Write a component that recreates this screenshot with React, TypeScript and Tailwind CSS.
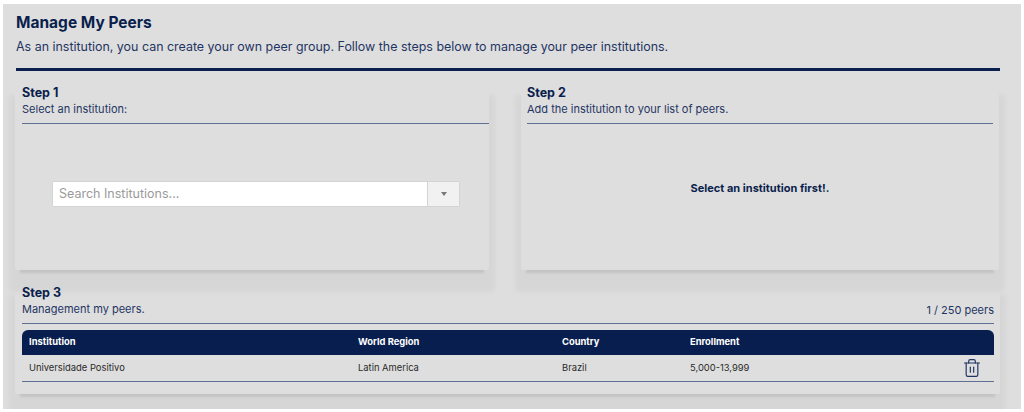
import { Trash2 } from "lucide-react";

const cardShadow =
  "shadow-[0_8px_2px_-5px_#c3c3c3,0_16px_4px_6px_#d6d6d6]";

function StepHeader({ step, text }: { step: string; text: string }) {
  return (
    <div className="h-[39px] border-b border-[#5f7094]">
      <div className="h-[15px] text-[12.5px] leading-[15px] font-bold text-[#0a1f4d]">{step}</div>
      <div className="mt-[2px] h-[15px] text-[11px] leading-[15px] text-[#1f3563]">{text}</div>
    </div>
  );
}

export default function App() {
  return (
    <div className="h-[412px] w-[1024px] overflow-hidden bg-white pt-[4px] pl-[3px] font-['Inter',sans-serif]">
      <div className="h-[405px] w-[1018px] overflow-hidden bg-[#dedede] pt-[9px] pl-[13px]">
        <h1 className="h-[20px] text-[15.5px] leading-[20px] font-bold text-[#0a1f4d]">Manage My Peers</h1>
        <p className="mt-[6px] h-[16px] text-[12.44px] leading-[16px] text-[#1f3563]">
          As an institution, you can create your own peer group. Follow the steps below to manage your peer institutions.
        </p>
        <div className="mt-[13px] h-[3px] w-[984px] bg-[#0a1f4d]" />

        <div className="mt-[14px] -ml-[1px] flex gap-[32px]">
          <section className={`h-[185px] w-[474px] rounded-b-[2px] bg-[#dedede] pl-[7px] ${cardShadow}`}>
            <StepHeader step="Step 1" text="Select an institution:" />
            <div className="mt-[57px] ml-[30px] flex h-[26px] w-[408px] rounded-[2px] border border-[#d4d4d4] bg-white">
              <input
                readOnly
                placeholder="Search Institutions..."
                className="min-w-0 flex-1 bg-white px-[6px] pt-[1px] text-[12.5px] text-[#555] outline-none placeholder:text-[#9a9a9a]"
              />
              <div className="flex w-[32px] flex-none items-center justify-center border-l border-[#d4d4d4] bg-[#f1f1f1]">
                <div className="h-0 w-0 border-x-[3px] border-t-[4px] border-x-transparent border-t-[#777]" />
              </div>
            </div>
          </section>

          <section className={`h-[185px] w-[478px] rounded-b-[2px] bg-[#dedede] px-[6px] ${cardShadow}`}>
            <StepHeader step="Step 2" text="Add the institution to your list of peers." />
            <div className="flex h-[128px] items-center justify-center text-[11px] font-bold text-[#0a1f4d]">
              Select an institution first!.
            </div>
          </section>
        </div>

        <section className={`mt-[15px] -ml-[1px] h-[109px] w-[985px] rounded-b-[2px] pr-[6px] pl-[7px] ${cardShadow}`}>
          <div className="relative">
            <StepHeader step="Step 3" text="Management my peers." />
            <span className="absolute right-0 bottom-[6px] text-[11px] leading-[15px] text-[#1f3563]">1 / 250 peers</span>
          </div>
          <table className="mt-[6px] w-[972px] table-fixed border-collapse text-left text-[9.4px]">
            <colgroup>
              <col className="w-[336px]" />
              <col className="w-[204px]" />
              <col className="w-[128px]" />
              <col className="w-[250px]" />
              <col />
            </colgroup>
            <thead>
              <tr className="h-[25px] text-white">
                <th className="rounded-tl-[6px] bg-[#081e4e] pl-[7px] font-bold">Institution</th>
                <th className="bg-[#081e4e] font-bold">World Region</th>
                <th className="bg-[#081e4e] font-bold">Country</th>
                <th className="bg-[#081e4e] font-bold">Enrollment</th>
                <th className="rounded-tr-[6px] bg-[#081e4e]" />
              </tr>
            </thead>
            <tbody>
              <tr className="h-[26px] border-b border-[#5f7094] text-[#2a2a2a]">
                <td className="pl-[7px]">Universidade Positivo</td>
                <td>Latin America</td>
                <td>Brazil</td>
                <td>5,000-13,999</td>
                <td>
                  <Trash2 size={20} strokeWidth={1.4} className="ml-[22px] text-[#1f3563]" />
                </td>
              </tr>
            </tbody>
          </table>
        </section>
      </div>
    </div>
  );
}
